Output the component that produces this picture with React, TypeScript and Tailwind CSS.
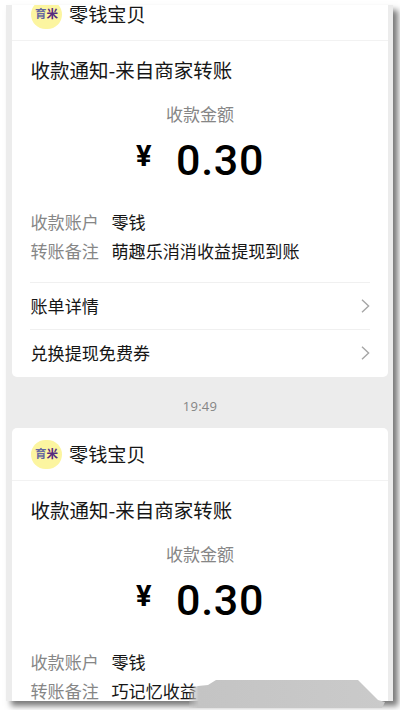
import React from 'react';

const YumiBadge: React.FC = () => (
  <div className="flex h-[29px] w-[31px] shrink-0 items-center justify-center rounded-full bg-[#fcf5a0] text-[11.5px] leading-none font-bold">
    <span className="text-[#6668a0]">育</span>
    <span className="text-[#552a80]">米</span>
  </div>
);

const Chevron: React.FC = () => (
  <svg className="h-[14px] w-[9px]" viewBox="0 0 9 14" fill="none" stroke="#a6a6a6" strokeWidth="1.4">
    <path d="M1 0.8 L7.6 7 L1 13.2" />
  </svg>
);

interface TransferCardProps {
  note: string;
  links?: string[];
}

const TransferCard: React.FC<TransferCardProps> = ({ note, links = [] }) => (
  <section className="h-[389px] shrink-0 rounded-[5px] bg-white px-[18px] text-[17.1px] text-[#161616]">
    <header className="-mx-[18px] flex h-[53px] items-center gap-[7px] border-b border-[#f2f2f2] pl-[19px]">
      <YumiBadge />
      <span className="pt-px text-[19.2px] leading-none">零钱宝贝</span>
    </header>
    <h2 className="mt-[14px] pl-[0.5px] text-[19.5px] leading-[30px]">收款通知-来自商家转账</h2>
    <p className="mt-[17px] text-center text-[17px] leading-[24px] text-[#868686]">收款金额</p>
    <div className="mt-[14px] flex h-[40px] pl-[106px] font-['Roboto',sans-serif] text-black">
      <span className="w-[40px] text-[29px] leading-[33px] font-bold">¥</span>
      <span className="text-[43px] leading-[40px] font-medium tracking-[0.7px]">0.30</span>
    </div>
    <dl className="mt-[27px] grid grid-cols-[81px_1fr] pl-[0.5px] leading-[29px]">
      <dt className="text-[#868686]">收款账户</dt>
      <dd>零钱</dd>
      <dt className="text-[#868686]">转账备注</dt>
      <dd className="whitespace-nowrap">{note}</dd>
    </dl>
    <ul className="mt-[17px]">
      {links.map((link) => (
        <li key={link} className="flex h-[47px] items-center justify-between border-t border-[#f0f0f0] pl-[0.5px]">
          <span>{link}</span>
          <Chevron />
        </li>
      ))}
    </ul>
  </section>
);

const App: React.FC = () => (
  <main className="relative h-[710px] w-[400px] overflow-hidden bg-white pt-[5px] pl-[6px] font-['Noto_Sans_CJK_SC',sans-serif]">
    <div className="h-[696px] w-[387px] shadow-[5px_5px_6px_0px_#7a7a7a]">
      <div className="flex h-full flex-col overflow-hidden bg-[#ececec] pr-[5px] pl-[6px]">
        <div className="-mt-[17px] flex flex-col">
          <TransferCard note="萌趣乐消消收益提现到账" links={['账单详情', '兑换提现免费券']} />
          <time className="flex h-[51px] items-center justify-center pt-[8px] font-['Open_Sans',sans-serif] text-[13px] tracking-[0.3px] text-[#858585]">
            19:49
          </time>
          <TransferCard note="巧记忆收益" />
        </div>
      </div>
    </div>
    {/* smudge over the bottom edge */}
    <svg className="absolute bottom-0 left-[184px] h-[34px] w-[204px]" viewBox="0 0 204 34">
      <defs>
        <filter id="soften" x="-10%" y="-20%" width="120%" height="140%">
          <feGaussianBlur stdDeviation="0.7" />
        </filter>
        <linearGradient id="fade" x1="0" x2="1" y1="0" y2="0">
          <stop offset="0" stopColor="#c4c4c4" stopOpacity="0.2" />
          <stop offset="0.05" stopColor="#c4c4c4" />
          <stop offset="1" stopColor="#cacaca" />
        </linearGradient>
      </defs>
      <path d="M5 13 L14 10 L24 9 L32 4 L174 4 L194 24 L201 26 L198 32 L5 32 Z" fill="url(#fade)" filter="url(#soften)" />
    </svg>
  </main>
);

export default App;
